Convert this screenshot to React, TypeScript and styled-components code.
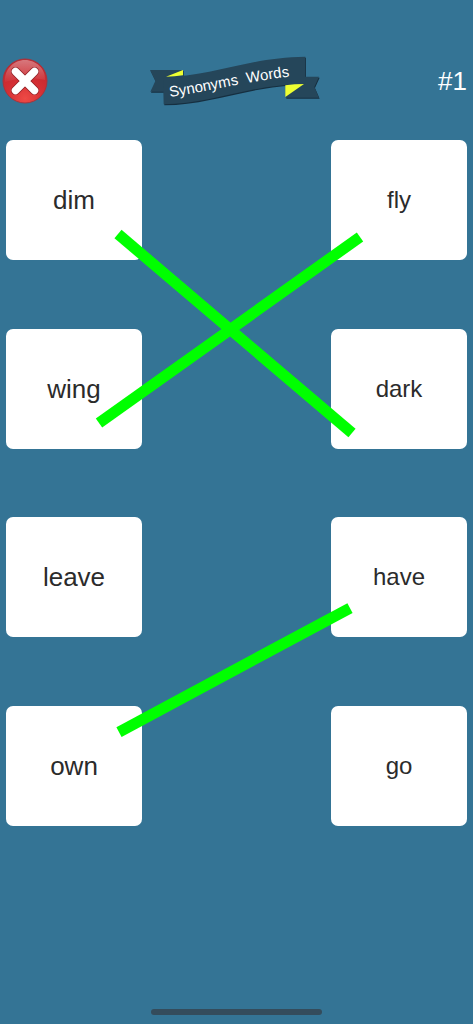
import React from "react";
import styled, { createGlobalStyle } from "styled-components";

const GlobalStyle = createGlobalStyle`
  * { box-sizing: border-box; }
  body {
    margin: 0;
    background: #347495;
    font-family: "Liberation Sans", Arial, sans-serif;
  }
`;

const Page = styled.div`
  min-height: 100vh;
  display: flex;
  flex-direction: column;
`;

const Header = styled.header`
  display: grid;
  grid-template-columns: 1fr auto 1fr;
  align-items: center;
  padding: 46px 6px 24px 2px;
`;

const CloseButton = styled.button`
  justify-self: start;
  display: flex;
  padding: 0;
  border: 0;
  background: none;
  cursor: pointer;
`;

const Title = styled.h1`
  margin: 0;
  display: flex;
  font-size: 15px;
  font-weight: 400;
`;

const Level = styled.span`
  justify-self: end;
  color: #fff;
  font-size: 26px;
  line-height: 30px;
`;

const Board = styled.main`
  position: relative;
  min-height: 67vh;
  display: flex;
  justify-content: space-between;
  padding: 0 6px;
`;

const Column = styled.div<{ $size: number }>`
  width: 136px;
  display: flex;
  flex-direction: column;
  justify-content: space-between;
  gap: 24px;
  font-size: ${(p) => p.$size}px;
`;

const Card = styled.button`
  height: 120px;
  padding: 0;
  border: 0;
  border-radius: 7px;
  background: #fff;
  color: #2b2b2b;
  font-family: inherit;
  font-size: inherit;
  line-height: 30px;
  cursor: pointer;
`;

const Links = styled.svg`
  position: absolute;
  inset: 0;
  width: 100%;
  height: 100%;
  pointer-events: none;

  line {
    stroke: #00ff00;
    stroke-width: 11px;
    vector-effect: non-scaling-stroke;
  }
`;

const Footer = styled.footer`
  margin-top: auto;
  padding: 24px 0 9px;
  display: flex;
  justify-content: center;
`;

const HomeBar = styled.div`
  width: 36%;
  height: 6px;
  border-radius: 3px;
  background: #344c5c;
`;

const leftWords = ["dim", "wing", "leave", "own"];
const rightWords = ["fly", "dark", "have", "go"];

const links = [
  { x1: 118, y1: 94, x2: 352, y2: 293 },
  { x1: 99, y1: 283, x2: 360, y2: 97 },
  { x1: 119, y1: 592, x2: 350, y2: 468 },
];

function CloseIcon() {
  return (
    <svg width="46" height="46" viewBox="0 0 46 46" aria-hidden="true">
      <defs>
        <radialGradient id="ball" cx="50%" cy="90%" r="85%">
          <stop offset="0" stopColor="#ee4a45" />
          <stop offset="0.5" stopColor="#d42f34" />
          <stop offset="1" stopColor="#c0262d" />
        </radialGradient>
        <linearGradient id="gloss" x1="0" y1="0" x2="0" y2="1">
          <stop offset="0" stopColor="#fff" stopOpacity="0.38" />
          <stop offset="1" stopColor="#fff" stopOpacity="0.03" />
        </linearGradient>
      </defs>
      <circle cx="23" cy="23" r="22" fill="url(#ball)" stroke="#a8333c" strokeWidth="1" />
      <path d="M3 24C2 11 12 2 23 2s21 9 20 20C31 19 14 20 3 24Z" fill="url(#gloss)" />
      <path d="M13.500 13.500 32.500 32.500M32.500 13.500 13.500 32.500" stroke="#8f1d22" strokeWidth="9" strokeLinecap="round" />
      <path d="M13.500 13.500 32.500 32.500M32.500 13.500 13.500 32.500" stroke="#fff" strokeWidth="7.500" strokeLinecap="round" />
    </svg>
  );
}

function Ribbon() {
  return (
    <svg width="190" height="70" viewBox="0 1 190 70" role="img" aria-label="Synonyms Words">
      <defs>
        <path id="baseline" d="M30 52C71 46 111 35 171 29" />
      </defs>
      <g transform="scale(0.33333)">
        <g fill="#162f40" transform="translate(2 3)">
          <path d="M30 75H129V140H31L46 108Z" />
          <path d="M437 95H537L523 126 537 158H437Z" />
          <path d="M69 96C210 96 330 36 496 35V117C330 118 210 178 71 178Z" />
        </g>
        <path d="M30 75H129V140H31L46 108Z" fill="#25465a" />
        <path d="M437 95H537L523 126 537 158H437Z" fill="#25465a" />
        <path d="M69 96C210 96 330 36 496 35V117C330 118 210 178 71 178Z" fill="#25465a" />
        <path d="M78 95 129 75V91Q104 95 78 95Z" fill="#edff32" />
        <path d="M436 121Q463 117 492 117L436 156Z" fill="#edff32" />
      </g>
      <text fill="#fff" fontSize="15">
        <textPath href="#baseline">{"Synonyms\u00a0\u00a0Words"}</textPath>
      </text>
    </svg>
  );
}

export default function App() {
  return (
    <Page>
      <GlobalStyle />
      <Header>
        <CloseButton aria-label="Close">
          <CloseIcon />
        </CloseButton>
        <Title>
          <Ribbon />
        </Title>
        <Level>#1</Level>
      </Header>
      <Board>
        <Column $size={26}>
          {leftWords.map((word) => (
            <Card key={word}>{word}</Card>
          ))}
        </Column>
        <Column $size={24}>
          {rightWords.map((word) => (
            <Card key={word}>{word}</Card>
          ))}
        </Column>
        <Links viewBox="0 0 473 686" preserveAspectRatio="none" aria-hidden="true">
          {links.map((l) => (
            <line key={l.x1} {...l} />
          ))}
        </Links>
      </Board>
      <Footer>
        <HomeBar />
      </Footer>
    </Page>
  );
}
